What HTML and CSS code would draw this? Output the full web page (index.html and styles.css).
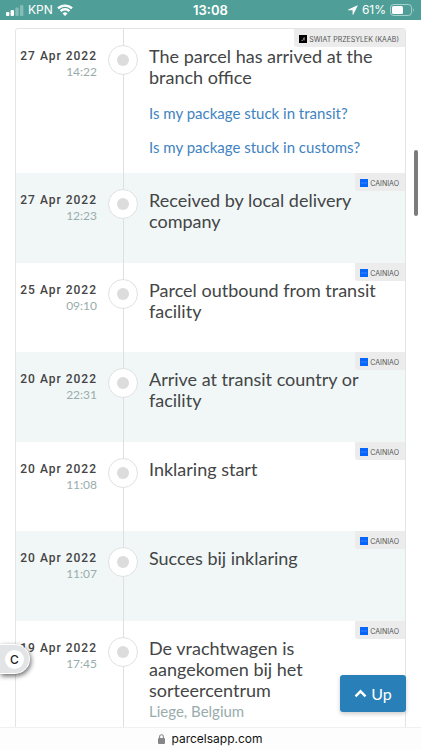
FILE: index.html
```html
<!DOCTYPE html>
<html lang="en">
<head>
<meta charset="utf-8">
<meta name="viewport" content="width=device-width, initial-scale=1">
<title>Parcel tracking</title>
<link rel="stylesheet" href="styles.css">
</head>
<body>
<header class="status">
  <div class="status-left">
    <svg class="signal" width="18" height="11" viewBox="0 0 18 11" aria-hidden="true"><rect x="0" y="7" width="3.4" height="4" rx="1"/><rect x="4.6" y="5" width="3.4" height="6" rx="1"/><rect class="dim" x="9.3" y="2.5" width="3.4" height="8.5" rx="1"/><rect class="dim" x="14" y="0" width="3.4" height="11" rx="1"/></svg>
    <span>KPN</span>
    <svg width="16" height="12" viewBox="0 0 16 12" aria-hidden="true"><g fill="none" stroke="#fff" stroke-width="2.3"><path d="M1 4.4a10 10 0 0 1 14 0"/><path d="M3.6 7.1a6.2 6.2 0 0 1 8.8 0"/></g><path fill="#fff" d="M8 12 5.5 9.4a3.6 3.6 0 0 1 5 0z"/></svg>
  </div>
  <time class="clock">13:08</time>
  <div class="status-right">
    <svg width="10" height="10" viewBox="0 0 10 10" aria-hidden="true"><path fill="#fff" d="M9.6.3.3 4.6q-.6.5.1.7h4.2v4.2q.3.7.7.1L9.8.6Q9.9.2 9.6.3z"/></svg>
    <span>61%</span>
    <svg width="25" height="12" viewBox="0 0 25 12" aria-hidden="true"><rect x=".5" y=".5" width="21" height="11" rx="3.2" fill="none" stroke="#fff" stroke-opacity=".5"/><rect x="2" y="2" width="11" height="8" rx="1.5" fill="#fff"/><path d="M23 4q1.5 2 0 4z" fill="#fff" opacity=".6"/></svg>
  </div>
</header>

<main class="page">
  <ol class="events">
    <li class="event event-latest">
      <div class="when"><span class="date">27 Apr 2022</span><span class="time">14:22</span></div>
      <div class="marker"><i class="dot"></i></div>
      <div class="what">
        <h2>The parcel has arrived at the branch office</h2>
        <a href="#transit">Is my package stuck in transit?</a>
        <a href="#customs">Is my package stuck in customs?</a>
      </div>
      <span class="carrier"><svg width="8" height="8" viewBox="0 0 8 8" aria-hidden="true"><path d="M0 0h8v8H0z"/><path d="M2.5 5.5h1.2l1.5-3v3" fill="none" stroke="#aaa" stroke-width=".8"/></svg>SWIAT PRZESYLEK (KAAB)</span>
    </li>
    <li class="event">
      <div class="when"><span class="date">27 Apr 2022</span><span class="time">12:23</span></div>
      <div class="marker"><i class="dot"></i></div>
      <div class="what"><h2>Received by local delivery company</h2></div>
      <span class="carrier"><svg width="8" height="8" viewBox="0 0 8 8" aria-hidden="true"><path fill="#0865fb" d="M0 0h8v8H0z"/><path d="M1 4h6" stroke="#4b92ff" stroke-dasharray="1 .4"/></svg>CAINIAO</span>
    </li>
    <li class="event">
      <div class="when"><span class="date">25 Apr 2022</span><span class="time">09:10</span></div>
      <div class="marker"><i class="dot"></i></div>
      <div class="what"><h2>Parcel outbound from transit facility</h2></div>
      <span class="carrier"><svg width="8" height="8" viewBox="0 0 8 8" aria-hidden="true"><path fill="#0865fb" d="M0 0h8v8H0z"/><path d="M1 4h6" stroke="#4b92ff" stroke-dasharray="1 .4"/></svg>CAINIAO</span>
    </li>
    <li class="event">
      <div class="when"><span class="date">20 Apr 2022</span><span class="time">22:31</span></div>
      <div class="marker"><i class="dot"></i></div>
      <div class="what"><h2>Arrive at transit country or facility</h2></div>
      <span class="carrier"><svg width="8" height="8" viewBox="0 0 8 8" aria-hidden="true"><path fill="#0865fb" d="M0 0h8v8H0z"/><path d="M1 4h6" stroke="#4b92ff" stroke-dasharray="1 .4"/></svg>CAINIAO</span>
    </li>
    <li class="event">
      <div class="when"><span class="date">20 Apr 2022</span><span class="time">11:08</span></div>
      <div class="marker"><i class="dot"></i></div>
      <div class="what"><h2>Inklaring start</h2></div>
      <span class="carrier"><svg width="8" height="8" viewBox="0 0 8 8" aria-hidden="true"><path fill="#0865fb" d="M0 0h8v8H0z"/><path d="M1 4h6" stroke="#4b92ff" stroke-dasharray="1 .4"/></svg>CAINIAO</span>
    </li>
    <li class="event">
      <div class="when"><span class="date">20 Apr 2022</span><span class="time">11:07</span></div>
      <div class="marker"><i class="dot"></i></div>
      <div class="what"><h2>Succes bij inklaring</h2></div>
      <span class="carrier"><svg width="8" height="8" viewBox="0 0 8 8" aria-hidden="true"><path fill="#0865fb" d="M0 0h8v8H0z"/><path d="M1 4h6" stroke="#4b92ff" stroke-dasharray="1 .4"/></svg>CAINIAO</span>
    </li>
    <li class="event">
      <div class="when"><span class="date">19 Apr 2022</span><span class="time">17:45</span></div>
      <div class="marker"><i class="dot"></i></div>
      <div class="what"><h2>De vrachtwagen is aangekomen bij het sorteercentrum</h2><p>Liege, Belgium</p></div>
      <span class="carrier"><svg width="8" height="8" viewBox="0 0 8 8" aria-hidden="true"><path fill="#0865fb" d="M0 0h8v8H0z"/><path d="M1 4h6" stroke="#4b92ff" stroke-dasharray="1 .4"/></svg>CAINIAO</span>
    </li>
  </ol>
  <div class="scroll-thumb"></div>
  <button class="consent" type="button"><span>C</span></button>
  <button class="up" type="button"><svg width="13" height="9" viewBox="0 0 13 9" aria-hidden="true"><path d="M1.5 7.3l5-5 5 5" fill="none" stroke="#fff" stroke-width="2.4"/></svg>Up</button>
</main>

<footer class="address">
  <svg width="7" height="10" viewBox="0 0 7 10" aria-hidden="true"><rect y="4" width="7" height="6" rx="1" fill="#85868a"/><path d="M1.6 4.5V2.7a1.9 1.9 0 0 1 3.8 0v1.8" fill="none" stroke="#85868a" stroke-width="1.1"/></svg>
  <span>parcelsapp.com</span>
</footer>
</body>
</html>
```
FILE: styles.css
```css
* { box-sizing: border-box; }

body {
  margin: 0;
  height: 100vh;
  display: flex;
  flex-direction: column;
  overflow: hidden;
  background: #fff;
  color: #434546;
  font-family: Lato, sans-serif;
}

svg { display: block; flex: none; }

.status {
  flex: none;
  height: 20px;
  padding: 0 6px;
  display: grid;
  grid-template-columns: 1fr auto 1fr;
  align-items: center;
  background: #4f9f98;
  color: #fff;
  font: 12px/20px Inter, sans-serif;
}
.status-left, .status-right { display: flex; align-items: center; gap: 4px; }
.status-right { justify-content: flex-end; }
.signal { fill: #fff; }
.dim { opacity: .3; }
.clock { font-size: 13px; font-weight: 600; }

.page {
  position: relative;
  flex: 1;
  min-height: 0;
  padding: 8px 15px 0;
  overflow: hidden;
}

.events {
  margin: 0;
  padding: 0;
  list-style: none;
  border: 1px solid #e3e5e5;
  border-radius: 3px;
}

.event {
  position: relative;
  display: grid;
  grid-template-columns: 81px 30px 1fr;
  column-gap: 11px;
  min-height: 89px;
}
.event:nth-child(even) { min-height: 90px; background: #f1f7f7; }
.event-latest { min-height: 144px; }

.when {
  padding-top: 19px;
  display: flex;
  flex-direction: column;
  align-items: flex-end;
  white-space: nowrap;
}
.date {
  font: 500 12px/16px Roboto, sans-serif;
  letter-spacing: 1px;
  color: #444;
}
.time { font-size: 12px; line-height: 16px; color: #99acac; }

.marker {
  padding-top: 16px;
  background: linear-gradient(#dedfdf, #dedfdf) center / 1px 100% no-repeat;
}
.dot {
  display: flex;
  width: 30px;
  height: 30px;
  align-items: center;
  justify-content: center;
  border: 1px solid #dfe1e1;
  border-radius: 50%;
  background: #fff;
}
.dot::before {
  content: "";
  width: 12px;
  height: 12px;
  border-radius: 50%;
  background: #dcdcdc;
}

.what { padding: 17px 24px 16px 0; }
.what h2 { margin: 0; font-size: 18px; line-height: 21px; font-weight: 400; }
.what a {
  display: block;
  margin-top: 16px;
  font-size: 15px;
  line-height: 18px;
  color: #3f83c1;
  text-decoration: none;
}
.event-latest .what { padding-bottom: 0; }
.what p { margin: 0; font-size: 15px; line-height: 21px; color: #99acac; }

.carrier {
  position: absolute;
  top: 0;
  right: 0;
  display: flex;
  align-items: center;
  gap: 2px;
  height: 18px;
  padding: 2px 6px 0 5px;
  border-radius: 0 0 0 3px;
  background: #ececec;
  color: #555;
  font: 7px Inter, sans-serif;
}

.scroll-thumb {
  position: absolute;
  top: 130px;
  right: 3px;
  width: 4px;
  height: 66px;
  border-radius: 2px;
  background: #7c7c7c;
}

.consent {
  position: absolute;
  left: 0;
  bottom: 53px;
  width: 30px;
  height: 30px;
  padding: 0 6px 0 5px;
  border: 1px solid #fff;
  border-left: 0;
  border-radius: 0 15px 15px 0;
  background: #e3e4e6;
  box-shadow: 1px 2px 5px #0009;
}
.consent span {
  display: block;
  width: 19px;
  border-radius: 50%;
  background: #fff;
  color: #222;
  font: 500 12px/19px Inter, sans-serif;
}

.up {
  position: absolute;
  right: 15px;
  bottom: 15px;
  width: 66px;
  height: 37px;
  padding: 0;
  display: flex;
  align-items: center;
  justify-content: center;
  gap: 4px;
  border: 0;
  border-radius: 3px;
  background: #2980b9;
  box-shadow: 0 2px 4px #0003;
  color: #fff;
  font: 16px Lato, sans-serif;
}

.address {
  flex: none;
  height: 23px;
  display: flex;
  align-items: center;
  justify-content: center;
  gap: 6px;
  border-top: 1px solid #f0f0f0;
  background: #fdfdfd;
  color: #111;
  font: 12px/22px Inter, sans-serif;
}
```
